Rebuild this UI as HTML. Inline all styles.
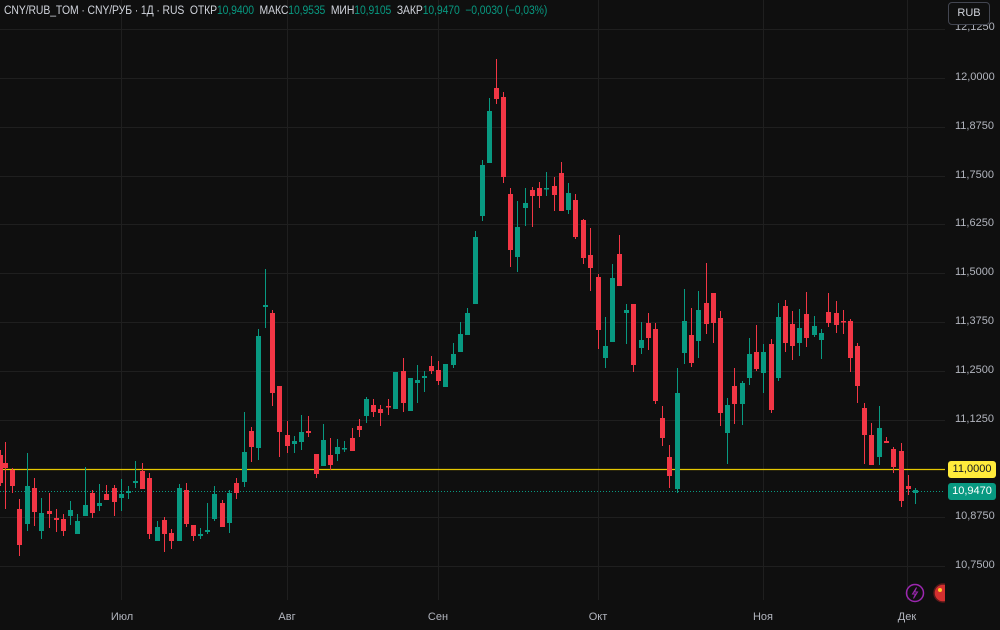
<!DOCTYPE html>
<html><head><meta charset="utf-8"><style>
body{margin:0;background:#0f0f0f;width:1000px;height:630px;overflow:hidden;font-family:"Liberation Sans","DejaVu Sans",sans-serif}
svg{position:absolute;left:0;top:0}
.g{fill:#089981;stroke:#089981}.r{fill:#f23645;stroke:#f23645}
line.g,line.r{stroke-width:1}
rect.g,rect.r{stroke-width:0}
.hdr{position:absolute;left:4px;top:5px;font-size:11.5px;color:#d1d4dc;white-space:nowrap;letter-spacing:-0.1px;transform:scaleX(0.905);transform-origin:0 0}
.hdr b{font-weight:normal;color:#089981}
.ax{position:absolute;left:955px;font-size:11px;color:#b2b5be}
.bt{position:absolute;top:611px;font-size:11px;color:#b2b5be;transform:translateX(-50%)}
.tag{position:absolute;left:948px;width:48px;height:17px;border-radius:3px;font-size:11px;line-height:17px;text-align:center}
.rub{position:absolute;left:948px;top:2px;width:40px;height:21px;border:1px solid #434651;border-radius:4px;color:#d1d4dc;font-size:11px;line-height:21px;text-align:center;background:#0f0f0f}
</style></head><body>
<svg width="1000" height="630">
<g stroke="#1f1f1f" stroke-width="1">
<line x1="0" y1="29.5" x2="945" y2="29.5"/><line x1="0" y1="78.5" x2="945" y2="78.5"/><line x1="0" y1="127.5" x2="945" y2="127.5"/><line x1="0" y1="176.5" x2="945" y2="176.5"/><line x1="0" y1="224.5" x2="945" y2="224.5"/><line x1="0" y1="273.5" x2="945" y2="273.5"/><line x1="0" y1="322.5" x2="945" y2="322.5"/><line x1="0" y1="371.5" x2="945" y2="371.5"/><line x1="0" y1="420.5" x2="945" y2="420.5"/><line x1="0" y1="469.5" x2="945" y2="469.5"/><line x1="0" y1="517.5" x2="945" y2="517.5"/><line x1="0" y1="566.5" x2="945" y2="566.5"/>
<line x1="121.5" y1="0" x2="121.5" y2="600"/><line x1="287.5" y1="0" x2="287.5" y2="600"/><line x1="438.5" y1="0" x2="438.5" y2="600"/><line x1="598.5" y1="0" x2="598.5" y2="600"/><line x1="763.5" y1="0" x2="763.5" y2="600"/><line x1="907.5" y1="0" x2="907.5" y2="600"/>
</g>
<line x1="0" y1="469.5" x2="945" y2="469.5" stroke="#e6c800" stroke-width="1.2"/>
<line x1="0" y1="491.5" x2="945" y2="491.5" stroke="#089981" stroke-width="1" stroke-dasharray="1 2"/>
<g>
<line class="r" x1="0.5" y1="450" x2="0.5" y2="486"/><rect class="r" x="-2" y="455" width="5" height="28"/>
<line class="r" x1="5.5" y1="442" x2="5.5" y2="509"/><rect class="r" x="3" y="463" width="5" height="5"/>
<line class="r" x1="12.5" y1="468" x2="12.5" y2="493"/><rect class="r" x="10" y="470" width="5" height="16"/>
<line class="r" x1="19.5" y1="499" x2="19.5" y2="556"/><rect class="r" x="17" y="509" width="5" height="36"/>
<line class="g" x1="27.5" y1="453" x2="27.5" y2="531"/><rect class="g" x="25" y="486" width="5" height="38"/>
<line class="r" x1="34.5" y1="478" x2="34.5" y2="526"/><rect class="r" x="32" y="488" width="5" height="24"/>
<line class="g" x1="41.5" y1="498" x2="41.5" y2="539"/><rect class="g" x="39" y="513" width="5" height="18"/>
<line class="r" x1="49.5" y1="493" x2="49.5" y2="528"/><rect class="r" x="47" y="511" width="5" height="3"/>
<line class="r" x1="56.5" y1="509" x2="56.5" y2="532"/><rect class="r" x="54" y="518" width="5" height="2"/>
<line class="r" x1="63.5" y1="514" x2="63.5" y2="536"/><rect class="r" x="61" y="519" width="5" height="12"/>
<line class="g" x1="70.5" y1="501" x2="70.5" y2="525"/><rect class="g" x="68" y="510" width="5" height="6"/>
<line class="g" x1="77.5" y1="514" x2="77.5" y2="534"/><rect class="g" x="75" y="521" width="5" height="13"/>
<line class="g" x1="85.5" y1="467" x2="85.5" y2="516"/><rect class="g" x="83" y="505" width="5" height="11"/>
<line class="r" x1="92.5" y1="490" x2="92.5" y2="518"/><rect class="r" x="90" y="493" width="5" height="20"/>
<line class="g" x1="99.5" y1="484" x2="99.5" y2="511"/><rect class="g" x="97" y="503" width="5" height="3"/>
<line class="r" x1="106.5" y1="485" x2="106.5" y2="500"/><rect class="r" x="104" y="494" width="5" height="6"/>
<line class="r" x1="114.5" y1="485" x2="114.5" y2="516"/><rect class="r" x="112" y="488" width="5" height="14"/>
<line class="g" x1="121.5" y1="479" x2="121.5" y2="511"/><rect class="g" x="119" y="494" width="5" height="4"/>
<line class="g" x1="128.5" y1="486" x2="128.5" y2="499"/><rect class="g" x="126" y="491" width="5" height="2"/>
<line class="g" x1="135.5" y1="461" x2="135.5" y2="488"/><rect class="g" x="133" y="481" width="5" height="2"/>
<line class="r" x1="142.5" y1="463" x2="142.5" y2="489"/><rect class="r" x="140" y="471" width="5" height="18"/>
<line class="r" x1="149.5" y1="473" x2="149.5" y2="539"/><rect class="r" x="147" y="478" width="5" height="56"/>
<line class="g" x1="157.5" y1="521" x2="157.5" y2="541"/><rect class="g" x="155" y="527" width="5" height="14"/>
<line class="r" x1="164.5" y1="517" x2="164.5" y2="552"/><rect class="r" x="162" y="520" width="5" height="14"/>
<line class="r" x1="171.5" y1="529" x2="171.5" y2="549"/><rect class="r" x="169" y="533" width="5" height="8"/>
<line class="g" x1="179.5" y1="484" x2="179.5" y2="541"/><rect class="g" x="177" y="488" width="5" height="53"/>
<line class="r" x1="186.5" y1="483" x2="186.5" y2="527"/><rect class="r" x="184" y="490" width="5" height="34"/>
<line class="r" x1="193.5" y1="525" x2="193.5" y2="541"/><rect class="r" x="191" y="525" width="5" height="11"/>
<line class="g" x1="200.5" y1="528" x2="200.5" y2="539"/><rect class="g" x="198" y="534" width="5" height="2"/>
<line class="g" x1="207.5" y1="503" x2="207.5" y2="534"/><rect class="g" x="205" y="530" width="5" height="2"/>
<line class="g" x1="214.5" y1="486" x2="214.5" y2="521"/><rect class="g" x="212" y="494" width="5" height="25"/>
<line class="r" x1="222.5" y1="500" x2="222.5" y2="527"/><rect class="r" x="220" y="503" width="5" height="24"/>
<line class="g" x1="229.5" y1="490" x2="229.5" y2="533"/><rect class="g" x="227" y="493" width="5" height="30"/>
<line class="r" x1="236.5" y1="478" x2="236.5" y2="499"/><rect class="r" x="234" y="483" width="5" height="10"/>
<line class="g" x1="244.5" y1="412" x2="244.5" y2="487"/><rect class="g" x="242" y="452" width="5" height="30"/>
<line class="r" x1="251.5" y1="427" x2="251.5" y2="462"/><rect class="r" x="249" y="431" width="5" height="16"/>
<line class="g" x1="258.5" y1="329" x2="258.5" y2="460"/><rect class="g" x="256" y="336" width="5" height="112"/>
<line class="g" x1="265.5" y1="269" x2="265.5" y2="328"/><rect class="g" x="263" y="305" width="5" height="2"/>
<line class="r" x1="272.5" y1="310" x2="272.5" y2="406"/><rect class="r" x="270" y="313" width="5" height="80"/>
<line class="r" x1="279.5" y1="386" x2="279.5" y2="457"/><rect class="r" x="277" y="386" width="5" height="46"/>
<line class="r" x1="287.5" y1="421" x2="287.5" y2="453"/><rect class="r" x="285" y="435" width="5" height="11"/>
<line class="g" x1="294.5" y1="436" x2="294.5" y2="453"/><rect class="g" x="292" y="441" width="5" height="3"/>
<line class="g" x1="301.5" y1="415" x2="301.5" y2="450"/><rect class="g" x="299" y="432" width="5" height="10"/>
<line class="r" x1="308.5" y1="416" x2="308.5" y2="437"/><rect class="r" x="306" y="431" width="5" height="2"/>
<line class="r" x1="316.5" y1="454" x2="316.5" y2="478"/><rect class="r" x="314" y="454" width="5" height="20"/>
<line class="g" x1="323.5" y1="424" x2="323.5" y2="466"/><rect class="g" x="321" y="440" width="5" height="26"/>
<line class="r" x1="330.5" y1="438" x2="330.5" y2="470"/><rect class="r" x="328" y="455" width="5" height="10"/>
<line class="g" x1="337.5" y1="439" x2="337.5" y2="461"/><rect class="g" x="335" y="447" width="5" height="7"/>
<line class="g" x1="344.5" y1="441" x2="344.5" y2="452"/><rect class="g" x="342" y="448" width="5" height="1.5"/>
<line class="r" x1="352.5" y1="428" x2="352.5" y2="451"/><rect class="r" x="350" y="438" width="5" height="13"/>
<line class="r" x1="359.5" y1="419" x2="359.5" y2="437"/><rect class="r" x="357" y="426" width="5" height="4"/>
<line class="g" x1="366.5" y1="397" x2="366.5" y2="423"/><rect class="g" x="364" y="399" width="5" height="17"/>
<line class="r" x1="373.5" y1="399" x2="373.5" y2="417"/><rect class="r" x="371" y="405" width="5" height="7"/>
<line class="r" x1="380.5" y1="405" x2="380.5" y2="426"/><rect class="r" x="378" y="409" width="5" height="4"/>
<line class="r" x1="388.5" y1="399" x2="388.5" y2="415"/><rect class="r" x="386" y="406" width="5" height="1.5"/>
<line class="g" x1="395.5" y1="372" x2="395.5" y2="409"/><rect class="g" x="393" y="372" width="5" height="37"/>
<line class="r" x1="403.5" y1="358" x2="403.5" y2="412"/><rect class="r" x="401" y="371" width="5" height="32"/>
<line class="g" x1="410.5" y1="378" x2="410.5" y2="411"/><rect class="g" x="408" y="378" width="5" height="33"/>
<line class="g" x1="417.5" y1="365" x2="417.5" y2="403"/><rect class="g" x="415" y="380" width="5" height="3"/>
<line class="g" x1="424.5" y1="371" x2="424.5" y2="392"/><rect class="g" x="422" y="376" width="5" height="2"/>
<line class="r" x1="431.5" y1="356" x2="431.5" y2="374"/><rect class="r" x="429" y="366" width="5" height="5"/>
<line class="r" x1="438.5" y1="361" x2="438.5" y2="385"/><rect class="r" x="436" y="370" width="5" height="11"/>
<line class="g" x1="445.5" y1="364" x2="445.5" y2="387"/><rect class="g" x="443" y="364" width="5" height="23"/>
<line class="g" x1="453.5" y1="343" x2="453.5" y2="368"/><rect class="g" x="451" y="354" width="5" height="11"/>
<line class="g" x1="460.5" y1="322" x2="460.5" y2="352"/><rect class="g" x="458" y="334" width="5" height="18"/>
<line class="g" x1="467.5" y1="308" x2="467.5" y2="335"/><rect class="g" x="465" y="313" width="5" height="22"/>
<line class="g" x1="475.5" y1="231" x2="475.5" y2="304"/><rect class="g" x="473" y="237" width="5" height="67"/>
<line class="g" x1="482.5" y1="160" x2="482.5" y2="221"/><rect class="g" x="480" y="165" width="5" height="51"/>
<line class="g" x1="489.5" y1="98" x2="489.5" y2="163"/><rect class="g" x="487" y="111" width="5" height="52"/>
<line class="r" x1="496.5" y1="59" x2="496.5" y2="104"/><rect class="r" x="494" y="88" width="5" height="11"/>
<line class="r" x1="503.5" y1="92" x2="503.5" y2="183"/><rect class="r" x="501" y="97" width="5" height="80"/>
<line class="r" x1="510.5" y1="188" x2="510.5" y2="267"/><rect class="r" x="508" y="194" width="5" height="56"/>
<line class="g" x1="517.5" y1="201" x2="517.5" y2="272"/><rect class="g" x="515" y="227" width="5" height="30"/>
<line class="g" x1="525.5" y1="188" x2="525.5" y2="226"/><rect class="g" x="523" y="203" width="5" height="5"/>
<line class="r" x1="532.5" y1="187" x2="532.5" y2="227"/><rect class="r" x="530" y="190" width="5" height="6"/>
<line class="r" x1="539.5" y1="182" x2="539.5" y2="208"/><rect class="r" x="537" y="188" width="5" height="8"/>
<line class="g" x1="546.5" y1="172" x2="546.5" y2="196"/><rect class="g" x="544" y="188" width="5" height="1.5"/>
<line class="r" x1="554.5" y1="177" x2="554.5" y2="211"/><rect class="r" x="552" y="186" width="5" height="9"/>
<line class="r" x1="561.5" y1="162" x2="561.5" y2="211"/><rect class="r" x="559" y="173" width="5" height="38"/>
<line class="g" x1="568.5" y1="183" x2="568.5" y2="214"/><rect class="g" x="566" y="193" width="5" height="17"/>
<line class="r" x1="575.5" y1="194" x2="575.5" y2="239"/><rect class="r" x="573" y="200" width="5" height="37"/>
<line class="r" x1="583.5" y1="219" x2="583.5" y2="264"/><rect class="r" x="581" y="220" width="5" height="38"/>
<line class="r" x1="590.5" y1="228" x2="590.5" y2="291"/><rect class="r" x="588" y="255" width="5" height="13"/>
<line class="r" x1="598.5" y1="274" x2="598.5" y2="349"/><rect class="r" x="596" y="277" width="5" height="53"/>
<line class="g" x1="605.5" y1="317" x2="605.5" y2="368"/><rect class="g" x="603" y="346" width="5" height="12"/>
<line class="g" x1="612.5" y1="264" x2="612.5" y2="342"/><rect class="g" x="610" y="278" width="5" height="64"/>
<line class="r" x1="619.5" y1="235" x2="619.5" y2="286"/><rect class="r" x="617" y="254" width="5" height="32"/>
<line class="g" x1="626.5" y1="304" x2="626.5" y2="344"/><rect class="g" x="624" y="310" width="5" height="3"/>
<line class="r" x1="633.5" y1="304" x2="633.5" y2="372"/><rect class="r" x="631" y="304" width="5" height="61"/>
<line class="g" x1="641.5" y1="322" x2="641.5" y2="354"/><rect class="g" x="639" y="340" width="5" height="8"/>
<line class="r" x1="648.5" y1="313" x2="648.5" y2="350"/><rect class="r" x="646" y="323" width="5" height="15"/>
<line class="r" x1="655.5" y1="323" x2="655.5" y2="404"/><rect class="r" x="653" y="329" width="5" height="72"/>
<line class="r" x1="662.5" y1="406" x2="662.5" y2="446"/><rect class="r" x="660" y="418" width="5" height="20"/>
<line class="r" x1="669.5" y1="445" x2="669.5" y2="488"/><rect class="r" x="667" y="457" width="5" height="19"/>
<line class="g" x1="677.5" y1="368" x2="677.5" y2="493"/><rect class="g" x="675" y="393" width="5" height="96"/>
<line class="g" x1="684.5" y1="289" x2="684.5" y2="364"/><rect class="g" x="682" y="321" width="5" height="32"/>
<line class="r" x1="691.5" y1="308" x2="691.5" y2="367"/><rect class="r" x="689" y="335" width="5" height="28"/>
<line class="g" x1="698.5" y1="291" x2="698.5" y2="358"/><rect class="g" x="696" y="310" width="5" height="31"/>
<line class="r" x1="706.5" y1="263" x2="706.5" y2="334"/><rect class="r" x="704" y="303" width="5" height="21"/>
<line class="r" x1="713.5" y1="293" x2="713.5" y2="343"/><rect class="r" x="711" y="293" width="5" height="30"/>
<line class="r" x1="720.5" y1="311" x2="720.5" y2="426"/><rect class="r" x="718" y="318" width="5" height="95"/>
<line class="g" x1="727.5" y1="398" x2="727.5" y2="464"/><rect class="g" x="725" y="405" width="5" height="28"/>
<line class="r" x1="734.5" y1="368" x2="734.5" y2="424"/><rect class="r" x="732" y="386" width="5" height="18"/>
<line class="g" x1="742.5" y1="381" x2="742.5" y2="425"/><rect class="g" x="740" y="383" width="5" height="21"/>
<line class="g" x1="749.5" y1="338" x2="749.5" y2="385"/><rect class="g" x="747" y="354" width="5" height="24"/>
<line class="r" x1="756.5" y1="325" x2="756.5" y2="371"/><rect class="r" x="754" y="352" width="5" height="17"/>
<line class="g" x1="763.5" y1="344" x2="763.5" y2="393"/><rect class="g" x="761" y="352" width="5" height="21"/>
<line class="r" x1="771.5" y1="339" x2="771.5" y2="413"/><rect class="r" x="769" y="344" width="5" height="66"/>
<line class="g" x1="778.5" y1="303" x2="778.5" y2="381"/><rect class="g" x="776" y="317" width="5" height="61"/>
<line class="r" x1="785.5" y1="300" x2="785.5" y2="352"/><rect class="r" x="783" y="306" width="5" height="37"/>
<line class="r" x1="792.5" y1="311" x2="792.5" y2="360"/><rect class="r" x="790" y="324" width="5" height="22"/>
<line class="g" x1="799.5" y1="309" x2="799.5" y2="356"/><rect class="g" x="797" y="328" width="5" height="15"/>
<line class="r" x1="806.5" y1="292" x2="806.5" y2="347"/><rect class="r" x="804" y="314" width="5" height="24"/>
<line class="g" x1="814.5" y1="316" x2="814.5" y2="337"/><rect class="g" x="812" y="326" width="5" height="9"/>
<line class="g" x1="821.5" y1="329" x2="821.5" y2="359"/><rect class="g" x="819" y="333" width="5" height="7"/>
<line class="r" x1="828.5" y1="293" x2="828.5" y2="327"/><rect class="r" x="826" y="312" width="5" height="11"/>
<line class="r" x1="836.5" y1="301" x2="836.5" y2="333"/><rect class="r" x="834" y="313" width="5" height="12"/>
<line class="r" x1="843.5" y1="310" x2="843.5" y2="334"/><rect class="r" x="841" y="321" width="5" height="1.5"/>
<line class="r" x1="850.5" y1="319" x2="850.5" y2="372"/><rect class="r" x="848" y="321" width="5" height="37"/>
<line class="r" x1="857.5" y1="343" x2="857.5" y2="403"/><rect class="r" x="855" y="346" width="5" height="40"/>
<line class="r" x1="864.5" y1="403" x2="864.5" y2="464"/><rect class="r" x="862" y="408" width="5" height="27"/>
<line class="r" x1="871.5" y1="423" x2="871.5" y2="465"/><rect class="r" x="869" y="435" width="5" height="30"/>
<line class="g" x1="879.5" y1="406" x2="879.5" y2="465"/><rect class="g" x="877" y="428" width="5" height="29"/>
<line class="r" x1="886.5" y1="437" x2="886.5" y2="443"/><rect class="r" x="884" y="441" width="5" height="2"/>
<line class="r" x1="893.5" y1="447" x2="893.5" y2="473"/><rect class="r" x="891" y="449" width="5" height="18"/>
<line class="r" x1="901.5" y1="443" x2="901.5" y2="507"/><rect class="r" x="899" y="451" width="5" height="50"/>
<line class="r" x1="908.5" y1="475" x2="908.5" y2="495"/><rect class="r" x="906" y="486" width="5" height="3"/>
<line class="g" x1="915.5" y1="488" x2="915.5" y2="504"/><rect class="g" x="913" y="490" width="5" height="3"/>
</g>
<circle cx="915" cy="593" r="8.5" fill="none" stroke="#9c27b0" stroke-width="1.5"/>
<path d="M916.5 587.5 L912.5 594 L915.5 594 L913.5 598.5 L917.5 592 L914.5 592 Z" fill="none" stroke="#9c27b0" stroke-width="1"/>
<circle cx="943" cy="593" r="9" fill="#d32f2f" stroke="#5a1a1a" stroke-width="1.5"/>
<circle cx="940" cy="590" r="2" fill="#ffca28"/>
<rect x="945" y="0" width="55" height="630" fill="#0f0f0f"/>
</svg>
<div class="hdr">CNY/RUB_TOM · CNY/РУБ · 1Д · RUS &nbsp;ОТКР<b>10,9400</b> &nbsp;МАКС<b>10,9535</b> &nbsp;МИН<b>10,9105</b> &nbsp;ЗАКР<b>10,9470</b> &nbsp;<b>−0,0030 (−0,03%)</b></div>
<div class="ax" style="top:21px">12,1250</div>
<div class="ax" style="top:71px">12,0000</div>
<div class="ax" style="top:120px">11,8750</div>
<div class="ax" style="top:169px">11,7500</div>
<div class="ax" style="top:217px">11,6250</div>
<div class="ax" style="top:266px">11,5000</div>
<div class="ax" style="top:315px">11,3750</div>
<div class="ax" style="top:364px">11,2500</div>
<div class="ax" style="top:413px">11,1250</div>
<div class="ax" style="top:510px">10,8750</div>
<div class="ax" style="top:559px">10,7500</div>
<div class="tag" style="top:461px;background:#ffeb3b;color:#131722">11,0000</div>
<div class="tag" style="top:483px;background:#089981;color:#fff">10,9470</div>
<div class="rub">RUB</div>
<div class="bt" style="left:122px">Июл</div>
<div class="bt" style="left:287px">Авг</div>
<div class="bt" style="left:438px">Сен</div>
<div class="bt" style="left:598px">Окт</div>
<div class="bt" style="left:763px">Ноя</div>
<div class="bt" style="left:907px">Дек</div>
</body></html>
